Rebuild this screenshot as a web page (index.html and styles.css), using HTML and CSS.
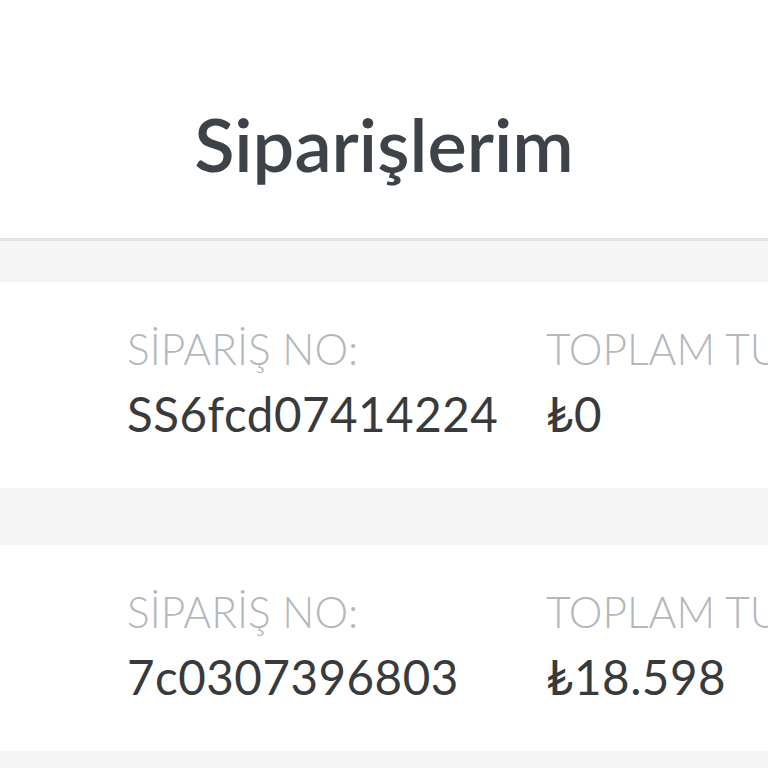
FILE: index.html
```html
<!DOCTYPE html>
<html lang="tr">
<head>
    <meta charset="UTF-8">
    <meta name="viewport" content="width=device-width, initial-scale=1.0">
    <title>Siparişlerim</title>
    <link rel="stylesheet" href="styles.css">
</head>
<body>
    <header class="page-header">
        <h1>Siparişlerim</h1>
    </header>

    <div class="order-list">
        <div class="order-card">
            <div class="order-field">
                <span class="field-label">SİPARİŞ NO:</span>
                <span class="field-value">SS6fcd07414224</span>
            </div>
            <div class="order-field">
                <span class="field-label">TOPLAM TUTAR:</span>
                <span class="field-value">₺0</span>
            </div>
        </div>
        <div class="order-card">
            <div class="order-field">
                <span class="field-label">SİPARİŞ NO:</span>
                <span class="field-value">7c0307396803</span>
            </div>
            <div class="order-field">
                <span class="field-label">TOPLAM TUTAR:</span>
                <span class="field-value">₺18.598</span>
            </div>
        </div>
    </div>
</body>
</html>
```

FILE: styles.css
```css
body {
    margin: 0;
    background-color: #f5f5f5;
    font-family: Lato, "Noto Sans", sans-serif;
    overflow: hidden;
}
.page-header {
    height: 238px;
    background-color: #fff;
    border-bottom: 3px solid #e3e3e3;
}
.page-header h1 {
    margin: 0;
    padding-top: 100px;
    font-size: 74px;
    line-height: 1.2;
    font-weight: 600;
    color: #3d4349;
    text-align: center;
}
.order-list {
    display: flex;
    flex-direction: column;
    gap: 57px;
    padding-top: 41px;
}
.order-card {
    height: 206px;
    box-sizing: border-box;
    background-color: #fff;
    padding: 41px 0 0 127px;
    display: grid;
    grid-template-columns: 419px 1fr;
    white-space: nowrap;
}
.order-field {
    display: flex;
    flex-direction: column;
    overflow: hidden;
}
.field-label {
    font-size: 42.5px;
    line-height: 1.2;
    font-weight: 300;
    color: #b3b8bc;
}
.field-value {
    margin-top: 11px;
    font-size: 47.5px;
    line-height: 1.2;
    letter-spacing: 0.5px;
    color: #383a3c;
}
```
